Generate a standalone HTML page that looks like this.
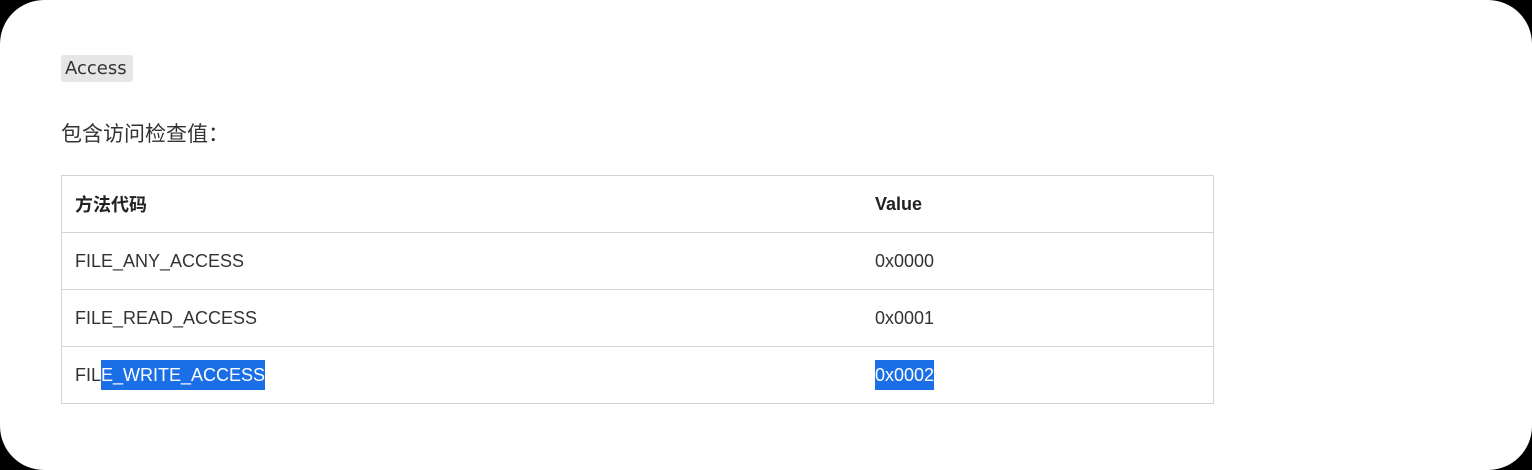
<!DOCTYPE html>
<html><head><meta charset="utf-8"><style>
html,body{margin:0;padding:0;background:#000;}
.p{position:relative;width:1532px;height:470px;background:#fff;border-radius:44px;overflow:hidden;font-family:"Liberation Sans","Noto Sans CJK SC",sans-serif;color:#222;}
.code{position:absolute;left:61px;top:55px;height:27px;line-height:27px;padding:0 6px 0 4px;background:#e6e6e6;border-radius:3px;font-size:18px;color:#333;font-family:"DejaVu Sans","Liberation Sans",sans-serif;}
.t1{position:absolute;left:61px;top:118px;font-size:21px;color:#333;}
table{position:absolute;left:61px;top:175px;border-collapse:collapse;width:1153px;border:1px solid #d4d4d4;}
td,th{border-top:1px solid #d4d4d4;border-bottom:1px solid #d4d4d4;height:56px;padding:0 0 0 13px;font-size:18px;color:#333;}
td.v,th.v{width:338px;}
th{text-align:left;color:#222;}
.s{background:#1a6fe6;color:#fff;padding:5px 0;}
</style></head><body><div class="p">
<div class="code">Access</div>
<div class="t1">包含访问检查值：</div>
<table>
<tr><th>方法代码</th><th class="v">Value</th></tr>
<tr><td>FILE_ANY_ACCESS</td><td class="v">0x0000</td></tr>
<tr><td>FILE_READ_ACCESS</td><td class="v">0x0001</td></tr>
<tr><td>FIL<span class="s">E_WRITE_ACCESS</span></td><td class="v"><span class="s">0x0002</span></td></tr>
</table>
</div></body></html>
